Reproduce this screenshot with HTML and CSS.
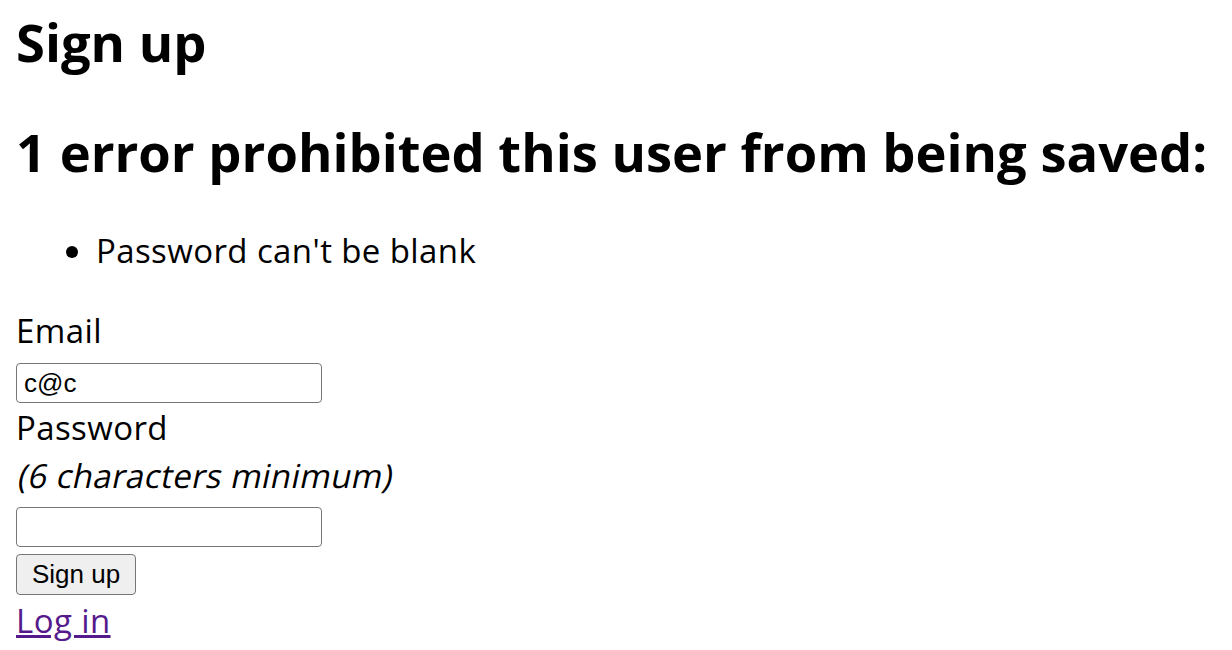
FILE: index.html
```html
<!DOCTYPE html>
<html lang="en">
<head>
  <meta charset="UTF-8">
  <title>Sign up</title>
  <link rel="stylesheet" href="styles.css">
</head>
<body>

<h2 class="title">Sign up</h2>

<form class="new_user" action="#" method="post">
  <div id="error_explanation">
    <h2>1 error prohibited this user from being saved:</h2>
    <ul>
      <li>Password can't be blank</li>
    </ul>
  </div>

  <div class="field field-email">
    <label for="user_email">Email</label>
    <input type="email" id="user_email" value="c@c">
  </div>

  <div class="field">
    <label for="user_password">Password</label>
    <em class="hint"><span>(6 characters minimum)</span></em>
    <input type="password" id="user_password">
  </div>

  <div class="actions">
    <input type="submit" value="Sign up">
  </div>
</form>

<a class="link" href="#">Log in</a>

</body>
</html>
```

FILE: styles.css
```css
body {
  margin: 0;
  padding: 0 16px;
  font-family: "Open Sans", "Liberation Sans", sans-serif;
  font-size: 33px;
  letter-spacing: 0.4px;
  line-height: 48px;
  color: #000;
  background-color: #fff;
}
h2 {
  margin: 0;
  font-size: 52.5px;
  line-height: 72px;
  font-weight: 700;
  letter-spacing: 0;
}
.title {
  margin-top: 6px;
}
#error_explanation h2 {
  margin-top: 38px;
}
#error_explanation ul {
  margin: 39px 0 0;
  padding-left: 80px;
}
.field {
  display: flex;
  flex-direction: column;
  align-items: flex-start;
}
.field-email {
  margin-top: 32px;
}
.field label, .field .hint {
  display: block;
  height: 48px;
}
.field .hint {
  font-style: normal;
}
.field .hint span {
  display: inline-block;
  transform: skewX(-12deg);
  transform-origin: 0 80%;
}
.field input {
  box-sizing: border-box;
  width: 306px;
  height: 40px;
  margin: 8px 0 1px;
  padding: 0 7px;
  border: 1px solid #767676;
  border-radius: 4px;
  font-family: "Liberation Sans", sans-serif;
  font-size: 26px;
  letter-spacing: 0;
}
.field .hint + input {
  margin-top: 7px;
  margin-bottom: 0;
}
.actions input {
  display: block;
  box-sizing: border-box;
  height: 41px;
  margin-top: 7px;
  padding: 0 15px;
  background-color: #efefef;
  border: 1px solid #767676;
  border-radius: 4px;
  font-family: "Liberation Sans", sans-serif;
  font-size: 26px;
  letter-spacing: 0;
  color: #000;
}
.link {
  display: inline-block;
  margin-top: 2px;
  color: #551a8b;
  text-decoration: underline;
}
```
